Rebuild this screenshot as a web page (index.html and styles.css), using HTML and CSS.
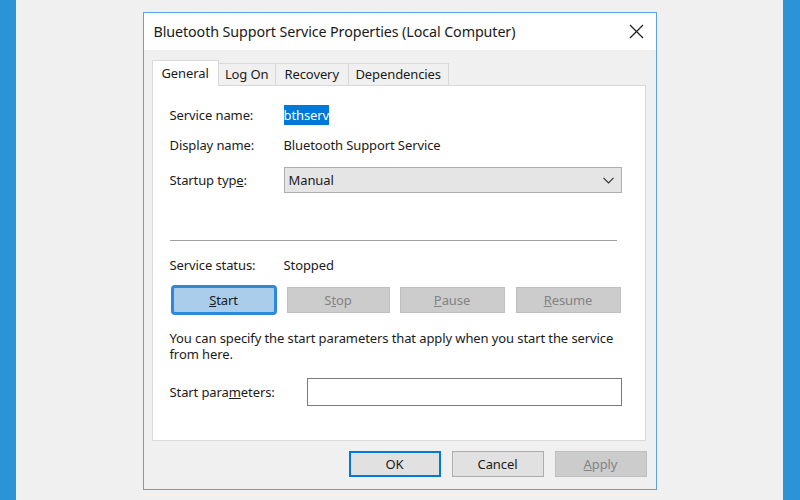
FILE: index.html
```html
<!DOCTYPE html>
<html lang="en">
<head>
  <meta charset="UTF-8">
  <title>Bluetooth Support Service Properties</title>
  <link rel="stylesheet" href="styles.css">
</head>
<body>
  <div class="strip"></div>
  <div class="desk">
    <div class="dialog">
      <div class="titlebar">
        <span class="title">Bluetooth Support Service Properties (Local Computer)</span>
        <svg class="close" width="15" height="15" viewBox="0 0 15 15">
          <path d="M1 1 L14 14 M14 1 L1 14" stroke="#222" stroke-width="1.3" fill="none"/>
        </svg>
      </div>
      <div class="body">
        <div class="tabs">
          <div class="tab active">General</div>
          <div class="tab logon">Log On</div>
          <div class="tab recovery">Recovery</div>
          <div class="tab deps">Dependencies</div>
        </div>
        <div class="panel">
          <div class="row r1">
            <span class="label">Service name:</span>
            <span class="value"><span class="sel">bthserv</span></span>
          </div>
          <div class="row r2">
            <span class="label">Display name:</span>
            <span class="value">Bluetooth Support Service</span>
          </div>
          <div class="row r3">
            <span class="label">Startup typ<u>e</u>:</span>
            <div class="select">
              <span>Manual</span>
              <svg width="11" height="7" viewBox="0 0 11 7">
                <path d="M0.5 0.8 L5.5 5.8 L10.5 0.8" stroke="#333" stroke-width="1.2" fill="none"/>
              </svg>
            </div>
          </div>
          <div class="sep"></div>
          <div class="row r4">
            <span class="label">Service status:</span>
            <span class="value">Stopped</span>
          </div>
          <div class="actions">
            <button class="btn focus"><u>S</u>tart</button>
            <button class="btn off">S<u>t</u>op</button>
            <button class="btn off"><u>P</u>ause</button>
            <button class="btn off"><u>R</u>esume</button>
          </div>
          <p class="hint">You can specify the start parameters that apply when you start the service<br>from here.</p>
          <div class="row r5">
            <span class="label wide">Start para<u>m</u>eters:</span>
            <div class="input"></div>
          </div>
        </div>
        <div class="footer">
          <button class="btn default">OK</button>
          <button class="btn">Cancel</button>
          <button class="btn off"><u>A</u>pply</button>
        </div>
      </div>
    </div>
  </div>
  <div class="strip right"></div>
</body>
</html>
```

FILE: styles.css
```css
body {
  margin: 0;
  height: 500px;
  display: flex;
  background-color: #f0f0f0;
  font-family: "Noto Sans", "Open Sans", sans-serif;
  font-size: 13px;
  letter-spacing: -0.1px;
  color: #1b1b1b;
  overflow: hidden;
}

.strip {
  width: 16px;
  background-color: #2b94d6;
}

.strip.right {
  width: 17px;
}

.desk {
  flex: 1;
  display: flex;
  justify-content: center;
  padding-top: 12px;
}

.dialog {
  width: 512px;
  height: 476px;
  border: 1px solid #5aa2dc;
  background-color: #f0f0f0;
  display: flex;
  flex-direction: column;
}

.titlebar {
  height: 37px;
  background-color: #fff;
  display: flex;
  align-items: center;
  justify-content: space-between;
  padding: 0 12px 0 10px;
}

.title {
  font-size: 14.3px;
  color: #1a1a1a;
  margin-top: -1px;
}

.close {
  margin-top: -1px;
}

.body {
  padding: 10px 10px 0 8px;
}

.tabs {
  display: flex;
  align-items: flex-end;
  height: 25px;
}

.tab {
  height: 22px;
  border: 1px solid #d9d9d9;
  border-bottom: none;
  border-left: none;
  background-color: #f0f0f0;
  line-height: 21px;
  text-align: center;
  box-sizing: border-box;
}

.tab.logon {
  width: 57px;
}

.tab.recovery {
  width: 73px;
}

.tab.deps {
  width: 100px;
}

.tab.active {
  height: 26px;
  margin-bottom: -1px;
  background-color: #fff;
  border-left: 1px solid #d9d9d9;
  padding: 0 9px;
  line-height: 24px;
  position: relative;
  z-index: 1;
}

.panel {
  height: 356px;
  box-sizing: border-box;
  width: 494px;
  background-color: #fff;
  border: 1px solid #d9d9d9;
  padding: 19px 0 0 17px;
}

.row {
  display: flex;
  align-items: center;
  height: 20px;
}

.label {
  width: 114px;
  flex-shrink: 0;
}

.label.wide {
  width: 137px;
}

.sel {
  background-color: #0078d7;
  color: #fff;
  padding: 1px 0;
}

.r2 {
  margin-top: 10px;
}

.r3 {
  margin-top: 12px;
  height: 26px;
}

.select {
  width: 338px;
  height: 26px;
  box-sizing: border-box;
  border: 1px solid #adadad;
  background-color: #e5e5e5;
  display: flex;
  align-items: center;
  justify-content: space-between;
  padding: 0 7px 0 4px;
}

.sep {
  width: 447px;
  height: 1px;
  background-color: #a0a0a0;
  margin-top: 47px;
}

.r4 {
  margin-top: 14px;
}

.actions {
  display: flex;
  gap: 10px;
  margin-top: 10px;
  align-items: center;
}

.btn {
  width: 103px;
  height: 26px;
  font: inherit;
  letter-spacing: inherit;
  color: #1b1b1b;
  background-color: #e1e1e1;
  border: 1px solid #adadad;
  padding: 0;
}

.btn.off {
  background-color: #cccccc;
  border-color: #bfbfbf;
  color: #838383;
}

.btn.focus {
  width: 106px;
  height: 30px;
  background-color: #a9cdea;
  border: 3px solid #2e8ad8;
  border-radius: 4px;
  margin-left: 1px;
}

.actions .btn.off:nth-child(3),
.actions .btn.off:nth-child(4) {
  width: 105px;
}

.actions .btn.off:nth-child(4) {
  margin-left: 1px;
}

.hint {
  margin: 15px 0 0 0;
  line-height: 16px;
}

.r5 {
  margin-top: 16px;
  height: 28px;
}

.input {
  width: 315px;
  height: 28px;
  box-sizing: border-box;
  border: 1px solid #7a7a7a;
  background-color: #fff;
}

.footer {
  display: flex;
  justify-content: flex-end;
  gap: 11px;
  margin-top: 10px;
  margin-right: -1px;
}

.footer .btn {
  width: 92px;
}

.btn.default {
  border: 2px solid #0078d7;
}
```
